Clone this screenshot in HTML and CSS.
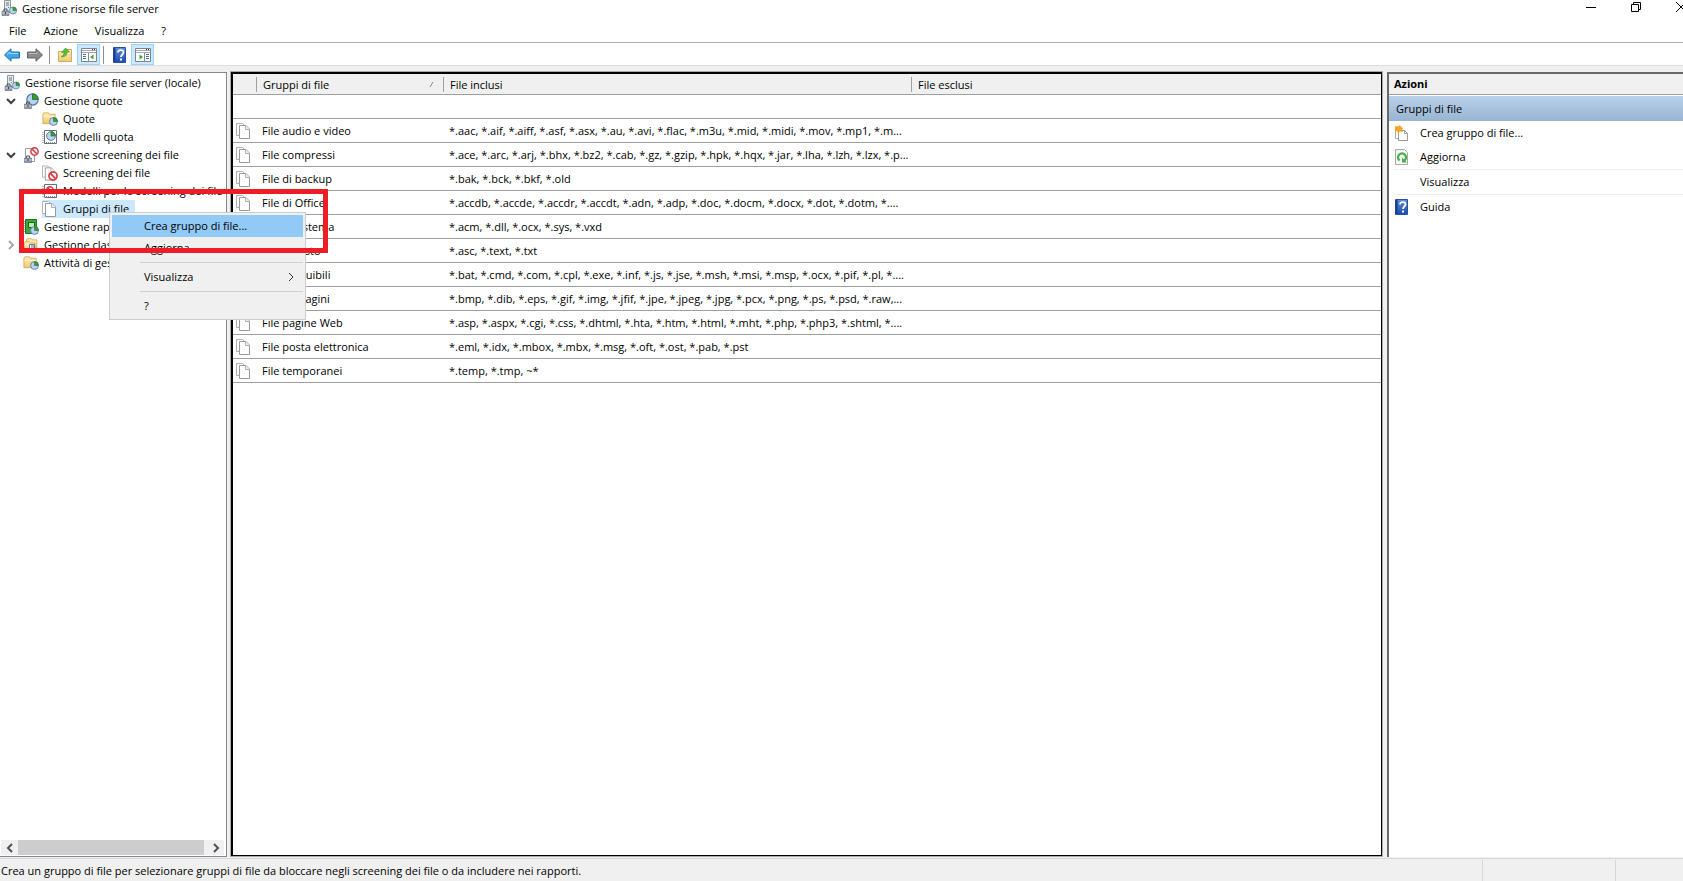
FILE: index.html
```html
<!DOCTYPE html>
<html lang="it">
<head>
<meta charset="utf-8">
<title>Gestione risorse file server</title>
<link rel="stylesheet" href="styles.css">
</head>
<body>
<svg class="defs" aria-hidden="true">
  <defs>
    <linearGradient id="blue" x2="0" y2="1"><stop stop-color="#5f8fd8"/><stop offset="1" stop-color="#1c4cb0"/></linearGradient>
    <linearGradient id="gold" x2="0" y2="1"><stop stop-color="#fff0b8"/><stop offset="1" stop-color="#efc970"/></linearGradient>
    <symbol id="pie" viewBox="0 0 16 16"><circle cx="8" cy="8" r="7" fill="#b8d2f0" stroke="#5878a8" stroke-width="1.5"/><path d="M8 8V1a7 7 0 0 1 7 7z" fill="#35a030" stroke="#286838"/></symbol>
    <symbol id="no" viewBox="0 0 16 16"><circle cx="8" cy="8" r="6.5" fill="#fff" stroke="#d8363c" stroke-width="2.6"/><path d="M3.5 3.5l9 9" stroke="#d8363c" stroke-width="2.6"/></symbol>
    <symbol id="case" viewBox="0 0 16 16"><path d="M5 6V2h6v4" fill="none" stroke="#505860" stroke-width="2"/><path d="M1 6h14v9H1z" fill="#8c98a8" stroke="#505860"/><path d="M1 10h14" stroke="#e8edf2" stroke-width="1.5"/><path d="M7 8h2v4H7z" fill="#39424c"/></symbol>
    <symbol id="folder" viewBox="0 0 16 16"><path d="M1 3.5l1-1.500h5l1 1.500h6v10H1z" fill="url(#gold)" stroke="#d3ab5c"/><path d="M1.500 6h12" stroke="#fff3bd"/></symbol>
    <symbol id="pages" viewBox="0 0 16 16"><path d="M4 12.500H.5V.5h6l2 2" fill="#fff" stroke="#b0b0b0"/><path d="M3.500 2.500h6.500l3.500 3.500v9.500h-10z" fill="#fff" stroke="#999"/><path d="M9.500 2.500v4h4" fill="#eee" stroke="#b0b0b0"/></symbol>
    <symbol id="server" viewBox="0 0 16 16"><path d="M3.500.5h6v12h-6z" fill="#e2e7ea" stroke="#8d979f"/><path d="M5 3h3M5 5h3" stroke="#68747e"/><path d="M7 7h1v1H7z" fill="#3a3"/><use href="#case" x="0" y="8" width="9" height="8"/><use href="#pie" x="8" y="6" width="8" height="9"/></symbol>
    <symbol id="quota" viewBox="0 0 16 16"><use href="#pie" x="3" y="0" width="13" height="13"/><use href="#case" x="0" y="8" width="10" height="8"/></symbol>
    <symbol id="quotafolder" viewBox="0 0 16 16"><use href="#folder" width="15" height="15"/><use href="#pie" x="7" y="6" width="9" height="9"/></symbol>
    <symbol id="quotamodel" viewBox="0 0 16 16"><path d="M2.500 1.500h12v13h-12z" fill="#fff" stroke="#68707c"/><path d="M1 3v11M4 13.500h9" stroke="#889" stroke-dasharray="1 1"/><use href="#pie" x="4" y="2" width="10" height="10"/></symbol>
    <symbol id="screening" viewBox="0 0 16 16"><path d="M2.500 1.500h9v13h-9z" fill="#fff" stroke="#a0a0a0"/><use href="#no" x="7" y="0" width="9" height="9"/><use href="#case" x="0" y="8" width="10" height="8"/></symbol>
    <symbol id="screen" viewBox="0 0 16 16"><use href="#pages" width="15" height="16"/><use href="#no" x="6" y="6" width="10" height="10"/></symbol>
    <symbol id="screenmodel" viewBox="0 0 16 16"><path d="M2.500 1.500h12v13h-12z" fill="#fff" stroke="#68707c"/><path d="M1 3v11M4 13.500h9" stroke="#889" stroke-dasharray="1 1"/><use href="#no" x="4" y="3" width="8" height="8"/></symbol>
    <symbol id="report" viewBox="0 0 16 16"><path d="M2.500.5h11v14h-11z" fill="#38a838" stroke="#207528"/><path d="M5.500 3.500h6v5h-6z" fill="#bfe8b5" stroke="#176020"/><path d="M1 2v12" stroke="#456" stroke-dasharray="1 1"/><use href="#pie" x="7" y="7" width="9" height="9"/></symbol>
    <symbol id="class" viewBox="0 0 16 16"><use href="#folder" x="2" width="14" height="13"/><use href="#folder" y="3" width="14" height="13"/><path d="M6.500 7.500h5v5h-5z" fill="#fff" stroke="#679"/><path d="M8 9h3M8 11h3" stroke="#3978b8"/></symbol>
    <symbol id="help" viewBox="0 0 14 16"><path d="M.5.500h12v15H.5z" fill="url(#blue)" stroke="#2850a0"/><path d="M1.500 1v14" stroke="#1c3c8c" stroke-width="2"/><path d="M5 5.500c0-3.500 5.500-3 5.500-.2C10.500 7.500 8 7.500 8 10" fill="none" stroke="#fff" stroke-width="1.800"/><path d="M7 11.500h2v2H7z" fill="#fff"/></symbol>
    <symbol id="window" viewBox="0 0 16 14"><path d="M.5.500h15v13H.5z" fill="#fff" stroke="#80858c"/><path d="M1 2.500h14M1 4.500h14" stroke="#a6abb2"/><path d="M11 1.500h1M13 1.500h1" stroke="#333"/></symbol>
    <symbol id="refresh" viewBox="0 0 14 16"><path d="M.5.500h9l3 3v12H.5z" fill="#f8f8f8" stroke="#aaa"/><path d="M4.500 11.500a4 4 0 1 1 5 0" fill="none" stroke="#45b04a" stroke-width="2.200"/><path d="M7 8.500v5h5z" fill="#45b04a"/></symbol>
    <symbol id="newpages" viewBox="0 0 14 16"><path d="M.5 2.500h6v11h-6z" fill="#fff" stroke="#aaa"/><path d="M3.500 5.500h6l3 3v7h-9z" fill="#fff" stroke="#999"/><path d="M9.500 5.500v3h3" fill="none" stroke="#aaa"/><path d="M0 1l3 .5L5 0l1 2 2 1-1 2 1 2-3-.5L3 8 2 6H0z" fill="#f8a51c"/></symbol>
  </defs>
</svg>
<div class="window">
  <header class="titlebar">
    <svg class="icon"><use href="#server"/></svg>
    <h1 class="title">Gestione risorse file server</h1>
    <div class="controls">
      <button class="control" aria-label="Riduci a icona"><svg width="10" height="10"><path d="M0 5.500h10" stroke="#000"/></svg></button>
      <button class="control" aria-label="Ripristina"><svg width="10" height="10"><path d="M.5 2.500h7v7h-7zM2.500 2V.5h7v7H8" fill="none" stroke="#000"/></svg></button>
      <button class="control" aria-label="Chiudi"><svg width="10" height="10"><path d="M0 0l10 10M10 0L0 10" stroke="#000"/></svg></button>
    </div>
  </header>
  <nav class="menubar">
    <button class="menu">File</button><button class="menu">Azione</button><button class="menu">Visualizza</button><button class="menu">?</button>
  </nav>
  <div class="toolbar">
    <button class="tool" aria-label="Indietro"><svg width="16" height="14"><path d="M.5 7L7 .8V4h8.500v6H7v3.200z" fill="#3da5ea" stroke="#1c6db4"/><path d="M3 6.500L6 4v1.500h8" fill="none" stroke="#9bdcff"/></svg></button>
    <button class="tool" aria-label="Avanti"><svg width="16" height="14"><path d="M15.500 7L9 .8V4H.5v6H9v3.200z" fill="#8b8b8b" stroke="#606060"/><path d="M1.500 5.500H10V4" fill="none" stroke="#bbb"/></svg></button>
    <span class="divider"></span>
    <button class="tool" aria-label="Livello superiore"><svg width="15" height="16"><path d="M.5 4.500h5l1-2h7v12H.5z" fill="url(#gold)" stroke="#d0aa60"/><path d="M3 9.500c2-.5 3-2 3-4H3.500L7.500 1l4 4H9C9 8.500 6.500 10.500 3 9.500z" fill="#55bd35" stroke="#3f9c33" stroke-width=".6"/></svg></button>
    <button class="tool pressed" aria-label="Mostra albero console"><svg width="16" height="14"><use href="#window"/><path d="M7.500 5v8" stroke="#888"/><path d="M2 6.500h3M2 8.500h3M2 10.500h3" stroke="#3978b8"/><path d="M12.500 6.500v5L9 9z" fill="#35a830"/></svg></button>
    <span class="divider"></span>
    <button class="tool" aria-label="Guida"><svg width="14" height="16"><use href="#help"/></svg></button>
    <button class="tool pressed" aria-label="Mostra riquadro azioni"><svg width="16" height="14"><use href="#window"/><path d="M9.500 5v8" stroke="#888"/><path d="M11 6.500h3M11 8.500h3M11 10.500h3" stroke="#3978b8"/><path d="M4.500 6.500v5L8 9z" fill="#35a830"/></svg></button>
  </div>
  <main class="panes">
    <section class="tree-pane">
      <ul class="tree">
        <li class="node root"><svg class="icon"><use href="#server"/></svg><span class="label">Gestione risorse file server (locale)</span></li>
        <li class="node"><svg class="arrow"><path d="M1 3l4 4 4-4"/></svg><svg class="icon"><use href="#quota"/></svg><span class="label">Gestione quote</span></li>
        <li class="node leaf"><svg class="icon"><use href="#quotafolder"/></svg><span class="label">Quote</span></li>
        <li class="node leaf"><svg class="icon"><use href="#quotamodel"/></svg><span class="label">Modelli quota</span></li>
        <li class="node"><svg class="arrow"><path d="M1 3l4 4 4-4"/></svg><svg class="icon"><use href="#screening"/></svg><span class="label">Gestione screening dei file</span></li>
        <li class="node leaf"><svg class="icon"><use href="#screen"/></svg><span class="label">Screening dei file</span></li>
        <li class="node leaf"><svg class="icon"><use href="#screenmodel"/></svg><span class="label">Modelli per lo screening dei file</span></li>
        <li class="node leaf"><span class="picked"><svg class="icon"><use href="#pages"/></svg><span class="label">Gruppi di file</span></span></li>
        <li class="node"><span class="arrow"></span><svg class="icon"><use href="#report"/></svg><span class="label">Gestione rapporti di archiviazione</span></li>
        <li class="node"><svg class="arrow closed"><path d="M3 1l4 4-4 4"/></svg><svg class="icon"><use href="#class"/></svg><span class="label">Gestione classificazione</span></li>
        <li class="node"><span class="arrow"></span><svg class="icon"><use href="#quotafolder"/></svg><span class="label">Attività di gestione file</span></li>
      </ul>
      <div class="scrollbar">
        <button class="scroll" aria-label="Scorri a sinistra"><svg width="8" height="10"><path d="M6 1L2 5l4 4"/></svg></button>
        <span class="thumb"></span>
        <button class="scroll" aria-label="Scorri a destra"><svg width="8" height="10"><path d="M2 1l4 4-4 4"/></svg></button>
      </div>
    </section>
    <section class="list-pane">
      <table class="list">
        <colgroup><col class="c-icon"><col class="c-name"><col class="c-in"><col></colgroup>
        <thead><tr><th></th><th><span class="head">Gruppi di file<svg class="sort"><path d="M1 6l3-5"/></svg></span></th><th><span class="head">File inclusi</span></th><th><span class="head">File esclusi</span></th></tr></thead>
        <tbody>
          <tr><td></td><td></td><td></td><td></td></tr>
          <tr><td><svg class="icon"><use href="#pages"/></svg></td><td>File audio e video</td><td>*.aac, *.aif, *.aiff, *.asf, *.asx, *.au, *.avi, *.flac, *.m3u, *.mid, *.midi, *.mov, *.mp1, *.m...</td><td></td></tr>
          <tr><td><svg class="icon"><use href="#pages"/></svg></td><td>File compressi</td><td>*.ace, *.arc, *.arj, *.bhx, *.bz2, *.cab, *.gz, *.gzip, *.hpk, *.hqx, *.jar, *.lha, *.lzh, *.lzx, *.p...</td><td></td></tr>
          <tr><td><svg class="icon"><use href="#pages"/></svg></td><td>File di backup</td><td>*.bak, *.bck, *.bkf, *.old</td><td></td></tr>
          <tr><td><svg class="icon"><use href="#pages"/></svg></td><td>File di Office</td><td>*.accdb, *.accde, *.accdr, *.accdt, *.adn, *.adp, *.doc, *.docm, *.docx, *.dot, *.dotm, *....</td><td></td></tr>
          <tr><td><svg class="icon"><use href="#pages"/></svg></td><td>File di sistema</td><td>*.acm, *.dll, *.ocx, *.sys, *.vxd</td><td></td></tr>
          <tr><td><svg class="icon"><use href="#pages"/></svg></td><td>File di testo</td><td>*.asc, *.text, *.txt</td><td></td></tr>
          <tr><td><svg class="icon"><use href="#pages"/></svg></td><td>File eseguibili</td><td>*.bat, *.cmd, *.com, *.cpl, *.exe, *.inf, *.js, *.jse, *.msh, *.msi, *.msp, *.ocx, *.pif, *.pl, *....</td><td></td></tr>
          <tr><td><svg class="icon"><use href="#pages"/></svg></td><td>File immagini</td><td>*.bmp, *.dib, *.eps, *.gif, *.img, *.jfif, *.jpe, *.jpeg, *.jpg, *.pcx, *.png, *.ps, *.psd, *.raw,...</td><td></td></tr>
          <tr><td><svg class="icon"><use href="#pages"/></svg></td><td>File pagine Web</td><td>*.asp, *.aspx, *.cgi, *.css, *.dhtml, *.hta, *.htm, *.html, *.mht, *.php, *.php3, *.shtml, *....</td><td></td></tr>
          <tr><td><svg class="icon"><use href="#pages"/></svg></td><td>File posta elettronica</td><td>*.eml, *.idx, *.mbox, *.mbx, *.msg, *.oft, *.ost, *.pab, *.pst</td><td></td></tr>
          <tr><td><svg class="icon"><use href="#pages"/></svg></td><td>File temporanei</td><td>*.temp, *.tmp, ~*</td><td></td></tr>
        </tbody>
      </table>
    </section>
    <aside class="actions">
      <h2 class="actions-title">Azioni</h2>
      <h3 class="actions-group">Gruppi di file</h3>
      <button class="action"><svg class="glyph"><use href="#newpages"/></svg>Crea gruppo di file...</button>
      <button class="action"><svg class="glyph"><use href="#refresh"/></svg>Aggiorna</button>
      <button class="action ruled"><span class="glyph"></span>Visualizza</button>
      <button class="action ruled"><svg class="glyph"><use href="#help"/></svg>Guida</button>
    </aside>
  </main>
  <footer class="status"><span class="message">Crea un gruppo di file per selezionare gruppi di file da bloccare negli screening dei file o da includere nei rapporti.</span><span class="cell"></span><span class="cell last"></span></footer>
</div>
<div class="popup">
  <button class="item active">Crea gruppo di file...</button>
  <button class="item">Aggiorna</button>
  <hr class="rule">
  <button class="item">Visualizza<svg class="more"><path d="M2 1l4 4-4 4"/></svg></button>
  <hr class="rule">
  <button class="item">?</button>
</div>
<div class="marker"></div>
</body>
</html>
```
FILE: styles.css
```css
* { box-sizing: border-box; }
body { margin: 0; overflow: hidden; background: #fff; color: #000; font: 11px/18px "Open Sans", "Noto Sans", sans-serif; }
button { border: 0; padding: 0; background: none; color: inherit; font: inherit; text-align: left; }
h1, h2, h3, ul { margin: 0; padding: 0; font: inherit; list-style: none; }
svg { display: block; flex: none; }
.defs { position: absolute; width: 0; height: 0; }
.icon { width: 16px; height: 16px; flex: none; }
.window { display: flex; flex-direction: column; height: 100vh; overflow: hidden; }

.titlebar { display: flex; align-items: center; height: 20px; padding-left: 1px; }
.titlebar .icon { margin-bottom: 4px; }
.title { margin: 0 auto 2px 5px; }
.controls { display: flex; margin: 0 -3px 6px 0; gap: 35px; }
.control { flex: none; }
.menubar { display: flex; height: 23px; gap: 17px; padding: 2px 9px; border-bottom: 1px solid #b0b0b0; }
.toolbar { display: flex; align-items: flex-end; height: 23px; border-bottom: 1px solid #dcdcdc; }
.tool { display: flex; align-items: center; justify-content: center; width: 23px; height: 21px; }
.pressed { background: #cce8ff; border: 1px solid #99d1ff; }
.divider { width: 1px; height: 18px; margin: 0 4px 1px 3px; background: #8d8d8d; }

.panes { display: flex; flex: 1; min-height: 0; padding: 6px 0 1px; background: #f0f0f0; }
.tree-pane { display: flex; flex-direction: column; justify-content: space-between; width: 227px; border: solid #828790; border-width: 1px 1px 1px 0; background: #fff; overflow: hidden; }
.tree { padding: 1px 0; overflow: hidden; }
.node { display: flex; align-items: center; height: 18px; padding-left: 6px; white-space: nowrap; }
.root { padding-left: 4px; }
.leaf { padding-left: 42px; }
.label { padding-left: 5px; }
.arrow { width: 10px; height: 10px; margin-right: 7px; fill: none; stroke: #404040; stroke-width: 2; flex: none; }
.closed { stroke: #a6a6a6; }
.picked { display: flex; align-items: center; padding-right: 6px; background: #cce8ff; }
.scrollbar { display: flex; height: 15px; margin: 0 2px 1px 1px; background: #f0f0f0; }
.scroll { display: flex; align-items: center; justify-content: center; width: 17px; }
.scroll path { fill: none; stroke: #505050; stroke-width: 2; }
.thumb { flex: 1; background: #cdcdcd; margin-right: 3px; }

.list-pane { flex: 1; min-width: 0; margin: 0 5px 1px 4px; border: 1px solid #000; border-top-width: 2px; border-left-width: 2px; background: #fff; box-shadow: 0 0 0 1px #aaa; }
.list { width: 100%; table-layout: fixed; border-collapse: separate; border-spacing: 0; }
.c-icon { width: 23px; }
.c-name { width: 187px; }
.c-in { width: 468px; }
.list th { height: 21px; padding: 3px 0 2px; border-bottom: 1px solid #a0a0a0; background: #f0f0f0; font-weight: 400; text-align: left; line-height: 15px; }
.list td { height: 24px; padding: 0 0 0 6px; border-bottom: 1px solid #a0a0a0; white-space: nowrap; }
.list td:first-child { padding-left: 3px; }
.head { display: flex; justify-content: space-between; align-items: center; padding: 0 9px 0 6px; border-left: 1px solid #a0a0a0; }
.sort { width: 5px; height: 7px; fill: none; stroke: #888; }

.actions { width: 296px; border: solid #696969; border-width: 2px 0 0 2px; background: #fff; }
.actions-title { height: 21px; padding: 1px 0 0 5px; border-bottom: 1px solid #a0a0a0; background: #f0f0f0; font-weight: 700; }
.actions-group { height: 25px; margin-top: 1px; padding: 4px 0 0 7px; background: linear-gradient(#b9d1ea, #99b4d1); }
.action { display: flex; align-items: center; width: 100%; height: 24px; padding-left: 6px; }
.ruled { height: 25px; margin-left: 5px; padding-left: 1px; border-top: 1px solid #f0f0f0; }
.glyph { width: 14px; height: 16px; margin-right: 11px; flex: none; }

.status { display: flex; height: 23px; padding-top: 1px; border-top: 1px solid #d7d7d7; background: #f0f0f0; }
.message { flex: 1; padding: 2px 1px; }
.cell { width: 133px; border-left: 1px solid #d7d7d7; }
.last { width: 68px; }

.popup { position: absolute; left: 109px; top: 212px; width: 197px; padding: 2px; border: 1px solid #ccc; background: #f0f0f0; }
.item { display: flex; align-items: center; justify-content: space-between; width: 100%; height: 22px; padding: 0 8px 0 32px; }
.active { background: #91c9f7; }
.more { width: 8px; height: 10px; fill: none; stroke: #333; stroke-width: 1; }
.rule { height: 1px; margin: 3px 0 3px 28px; border: 0; background: #d0d0d0; }
.marker { position: absolute; left: 19px; top: 189px; width: 309px; height: 64px; border: 5px solid #ee1c24; pointer-events: none; }
```
